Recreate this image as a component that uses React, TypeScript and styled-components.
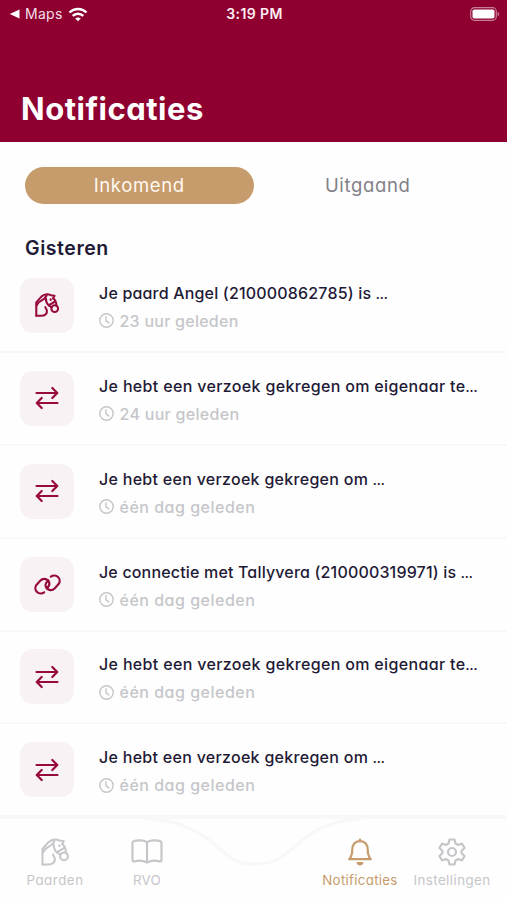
import React from "react";
import styled, { createGlobalStyle } from "styled-components";

const GlobalStyle = createGlobalStyle`
  * { box-sizing: border-box; }
  body { margin: 0; background: #fefefe; }
`;

const colors = {
  wine: "#8f0031",
  gold: "#c69c6d",
  ink: "#1f1a36",
  muted: "#c6c6ca",
};

const Screen = styled.div`
  width: 507px;
  height: 900px;
  overflow: hidden;
  display: flex;
  flex-direction: column;
  background: #fefefe;
  color: ${colors.ink};
  font-family: Inter, "Liberation Sans", sans-serif;
  font-feature-settings: "cv11";
  white-space: nowrap;
`;

const Header = styled.header`
  height: 142.4px;
  flex: none;
  background: ${colors.wine};
  color: #fff;
  display: flex;
  flex-direction: column;
  justify-content: space-between;
`;

const StatusBar = styled.div`
  height: 28px;
  padding: 0 7px 0 9px;
  display: grid;
  grid-template-columns: 1fr auto 1fr;
  align-items: center;
  font-feature-settings: normal;
`;

const BackToApp = styled.div`
  display: flex;
  align-items: center;
  gap: 5px;
  font-size: 14px;
  line-height: 28px;
  letter-spacing: 0.3px;
  color: #f3dfe6;
`;

const Clock = styled.div`
  font-size: 14px;
  font-weight: 600;
  line-height: 28px;
  letter-spacing: 0.4px;
  color: #fbeef2;
`;

const BatterySlot = styled.div`
  display: flex;
  justify-content: flex-end;
`;

const Title = styled.h1`
  margin: 0 0 13px 21px;
  font-size: 31px;
  line-height: 40px;
  font-weight: 700;
  letter-spacing: 0.5px;
`;

const Tabs = styled.div`
  flex: none;
  margin: 24.6px 25px 0;
  height: 37px;
  display: grid;
  grid-template-columns: 1fr 1fr;
`;

const Tab = styled.button<{ $active?: boolean }>`
  border: 0;
  padding: 0;
  border-radius: 19px;
  font: inherit;
  font-feature-settings: inherit;
  font-size: 18.5px;
  line-height: 37px;
  letter-spacing: 0.65px;
  background: ${(p) => (p.$active ? colors.gold : "transparent")};
  color: ${(p) => (p.$active ? "#fff8f0" : "#828187")};
`;

const SectionTitle = styled.h2`
  flex: none;
  margin: 30px 0 0 25px;
  height: 26px;
  font-size: 19.5px;
  line-height: 29px;
  font-weight: 600;
  letter-spacing: 0.55px;
`;

const List = styled.div`
  flex: 1;
  min-height: 0;
  overflow: hidden;
`;

const Row = styled.div`
  height: 92.9px;
  display: flex;
  align-items: center;
  gap: 25px;
  padding-left: 20px;
  border-bottom: 2px solid #f8f8f8;
`;

const IconTile = styled.div`
  width: 54px;
  height: 55px;
  border-radius: 13px;
  background: #f8f2f5;
  display: flex;
  align-items: center;
  justify-content: center;
  color: #970a3e;
`;

const RowBody = styled.div`
  display: flex;
  flex-direction: column;
  padding-top: 3px;
`;

const RowText = styled.div<{ $spacing: number }>`
  font-size: 16px;
  line-height: 27px;
  font-weight: 500;
  letter-spacing: ${(p) => p.$spacing}px;
`;

const Ellipsis = styled.span`
  font-size: 12px;
  font-weight: 700;
  letter-spacing: -0.5px;
`;

const RowTime = styled.div<{ $spacing: number }>`
  display: flex;
  align-items: center;
  gap: 5.5px;
  font-size: 16px;
  line-height: 26px;
  font-weight: 500;
  letter-spacing: ${(p) => p.$spacing}px;
  color: ${colors.muted};
`;

const BottomBar = styled.nav`
  position: relative;
  height: 86px;
  flex: none;
  display: grid;
  grid-template-columns: 92px 92px 1fr 92px 92px;
  padding: 24px 9px 0;
  background: #fefefe;
`;

const BarOutline = styled.svg`
  position: absolute;
  left: 0;
  top: 0;
`;

const NavItem = styled.a<{ $active?: boolean; $spacing: number }>`
  display: flex;
  flex-direction: column;
  align-items: center;
  font-size: 13.3px;
  line-height: 20px;
  letter-spacing: ${(p) => p.$spacing}px;
  color: ${(p) => (p.$active ? colors.gold : colors.muted)};
`;

const NavIcon = styled.span`
  height: 28px;
  margin-bottom: 4px;
  display: flex;
  align-items: center;
`;

const Stroke = ({ size = 28, width = 2, box = 28, children }: { size?: number; width?: number; box?: number; children: React.ReactNode }) => (
  <svg width={size} height={size} viewBox={`0 0 ${box} ${box}`} fill="none" stroke="currentColor" strokeWidth={width} strokeLinecap="round" strokeLinejoin="round">
    {children}
  </svg>
);

const HorseIcon = ({ size, width }: { size: number; width: number }) => (
  <Stroke size={size} width={width}>
    <path d="M1.500 26.500V11L7.500 4.200C10.500 1.400 15 .9 18.500 2.500l4.300.7-1.600 3" />
    <path d="M1.800 14.500 4.500 10.800l6.500-4.300 2.500-3.500" />
    <path d="M1.500 26.500h5.500c5 0 7.600-2.700 6.800-6.400l-1.800-3.600" />
    <path d="M12.700 6.500c0 3.500.8 5.800 3.300 8l3.500 2.200" />
    <path d="M21.200 6.200c2.300 1.500 3.600 4.600 3.900 8.500M16.200 14.200l6.800-4" />
    <circle cx="23" cy="18.300" r="3.900" />
    <path d="M18.300 7.400v.8" />
  </Stroke>
);

const SwapIcon = () => (
  <Stroke size={26} box={26} width={2.2}>
    <path d="M2.500 8h20.500M18.300 3l5 5-5 5M23.500 18H3M7.700 13l-5 5 5 5" />
  </Stroke>
);

const LinkIcon = () => (
  <Stroke size={27} width={2.3}>
    <path d="M10.500 22.100a5.600 5.600 0 0 1-8-7.700l3.900-4.200c3.300-3.400 8.600-2 9.500 2.200.4 2.200-.6 3.900-2.500 5.500" />
    <path d="M17.500 5.900a5.600 5.600 0 0 1 8 7.700l-3.900 4.200c-3.300 3.400-8.600 2-9.500-2.200-.4-2.200.6-3.900 2.500-5.500" />
  </Stroke>
);

const TimeIcon = () => (
  <Stroke size={15} box={15} width={1.4}>
    <circle cx="7.500" cy="7.500" r="6.700" />
    <path d="M7 3.700v4.200l2.800 2" />
  </Stroke>
);

const BookIcon = () => (
  <Stroke size={32} box={32} width={2.2}>
    <path d="M16 6.200C13 4 6.500 4 3 5c-1 .3-1.500.8-1.500 1.700V24c0 1.400.8 1.700 2 1.400 4-1 9-.8 12.500 1.200 3.500-2 8.500-2.200 12.500-1.200 1.200.3 2 0 2-1.400V6.700c0-.9-.5-1.400-1.500-1.700-3.500-1-10-1-13 1.200zM16 6.200v20.200" />
  </Stroke>
);

const BellIcon = () => (
  <Stroke width={2.2}>
    <path d="M14 3.200c-5 0-7.700 3.500-7.700 8.300 0 4.500-1 7.300-3 9.700h21.400c-2-2.400-3-5.200-3-9.700 0-4.800-2.700-8.300-7.700-8.300zM14 1.500v1.500" />
    <path d="M11.700 25h4.600c-.8 1.800-3.800 1.800-4.600 0z" fill="currentColor" />
  </Stroke>
);

const GearIcon = () => (
  <Stroke width={2.2}>
    <path d="M11.500 1.500h5l1 4 2.500 1.400 4-1.200 2.600 4.300-3 2.700v2.600l3 2.700-2.600 4.300-4-1.200-2.500 1.400-1 4h-5l-1-4L8 21.100l-4 1.200L1.400 18l3-2.700v-2.600l-3-2.700L4 5.700l4 1.200 2.500-1.400z" />
    <circle cx="14" cy="14" r="4" />
  </Stroke>
);

const icons = {
  horse: <HorseIcon size={24} width={2.4} />,
  swap: <SwapIcon />,
  link: <LinkIcon />,
};

type Item = { icon: keyof typeof icons; text: string; spacing: number; time: string; timeSpacing: number };

const items: Item[] = [
  { icon: "horse", text: "Je paard Angel (210000862785) is ", spacing: 0.18, time: "23 uur geleden", timeSpacing: 0.25 },
  { icon: "swap", text: "Je hebt een verzoek gekregen om eigenaar te", spacing: 0.34, time: "24 uur geleden", timeSpacing: 0.29 },
  { icon: "swap", text: "Je hebt een verzoek gekregen om ", spacing: 0.29, time: "één dag geleden", timeSpacing: 0.5 },
  { icon: "link", text: "Je connectie met Tallyvera (210000319971) is ", spacing: 0.17, time: "één dag geleden", timeSpacing: 0.5 },
  { icon: "swap", text: "Je hebt een verzoek gekregen om eigenaar te", spacing: 0.34, time: "één dag geleden", timeSpacing: 0.5 },
  { icon: "swap", text: "Je hebt een verzoek gekregen om ", spacing: 0.29, time: "één dag geleden", timeSpacing: 0.5 },
];

export default function App() {
  return (
    <Screen>
      <GlobalStyle />
      <Header>
        <StatusBar>
          <BackToApp>
            <svg width="11" height="10" viewBox="0 0 11 10" fill="#fff"><path d="M.8 5 10.500.6v8.800z" /></svg>
            Maps
            <svg width="20" height="15" viewBox="0 0 20 15" fill="none" stroke="#fff" strokeWidth="2.400">
              <path d="M1.500 5.500c4.800-4.600 12.200-4.600 17 0M4.700 8.900c3-2.900 7.600-2.900 10.600 0" />
              <path d="M10 14.300 7.200 11.500c1.600-1.500 4-1.500 5.600 0z" fill="#fff" stroke="none" />
            </svg>
          </BackToApp>
          <Clock>3:19 PM</Clock>
          <BatterySlot>
            <svg width="30" height="14" viewBox="0 0 30 14">
              <rect x=".7" y=".7" width="25.600" height="12.600" rx="3.800" fill="none" stroke="#c77f98" strokeWidth="1.200" />
              <rect x="2.500" y="2.500" width="22" height="9" rx="1.800" fill="#fff" />
              <path d="M27.700 4.700c2 .8 2 3.800 0 4.600z" fill="#c77f98" />
            </svg>
          </BatterySlot>
        </StatusBar>
        <Title>Notificaties</Title>
      </Header>
      <Tabs>
        <Tab $active>Inkomend</Tab>
        <Tab>Uitgaand</Tab>
      </Tabs>
      <SectionTitle>Gisteren</SectionTitle>
      <List>
        {items.map((item, i) => (
          <Row key={i}>
            <IconTile>{icons[item.icon]}</IconTile>
            <RowBody>
              <RowText $spacing={item.spacing}>
                {item.text}
                <Ellipsis>…</Ellipsis>
              </RowText>
              <RowTime $spacing={item.timeSpacing}>
                <TimeIcon />
                {item.time}
              </RowTime>
            </RowBody>
          </Row>
        ))}
      </List>
      <BottomBar>
        <BarOutline width="507" height="86" viewBox="0 0 507 86" fill="none">
          <path d="M0 3H507" stroke="#f8f8f8" strokeWidth="4" />
          <path d="M145 4.500C180 6 200 18 215 31S235 50 255 50S283 43 297 31S325 7 362 4.500" stroke="#f8f8f8" strokeWidth="3.500" />
        </BarOutline>
        <NavItem $spacing={0.55}><NavIcon><HorseIcon size={28} width={2} /></NavIcon>Paarden</NavItem>
        <NavItem $spacing={0.3}><NavIcon><BookIcon /></NavIcon>RVO</NavItem>
        <span />
        <NavItem $active $spacing={0.3}><NavIcon><BellIcon /></NavIcon>Notificaties</NavItem>
        <NavItem $spacing={0.46}><NavIcon><GearIcon /></NavIcon>Instellingen</NavItem>
      </BottomBar>
    </Screen>
  );
}
